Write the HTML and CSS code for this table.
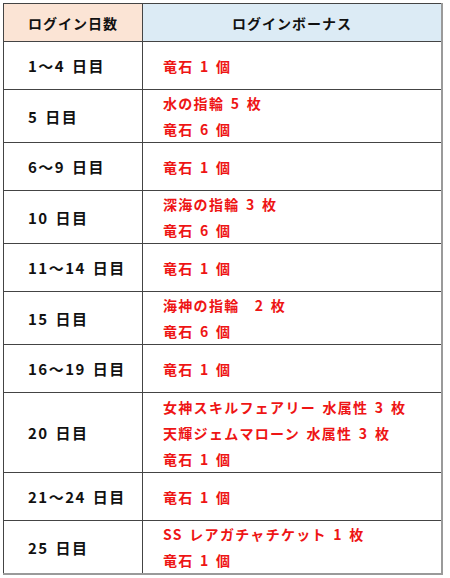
FILE: index.html
```html
<!DOCTYPE html>
<html lang="ja">
<head>
<meta charset="utf-8">
<link rel="stylesheet" href="styles.css">
</head>
<body>
<table class="bonus">
  <thead>
    <tr>
      <th class="h-days">ログイン日数</th>
      <th class="h-bonus">ログインボーナス</th>
    </tr>
  </thead>
  <tbody>
    <tr class="r1"><td class="day">1～4 日目</td><td class="item"><div>竜石 1 個</div></td></tr>
    <tr class="r2"><td class="day">5 日目</td><td class="item"><div>水の指輪 5 枚</div><div>竜石 6 個</div></td></tr>
    <tr class="r1"><td class="day">6～9 日目</td><td class="item"><div>竜石 1 個</div></td></tr>
    <tr class="r2"><td class="day">10 日目</td><td class="item"><div>深海の指輪 3 枚</div><div>竜石 6 個</div></td></tr>
    <tr class="r1"><td class="day">11～14 日目</td><td class="item"><div>竜石 1 個</div></td></tr>
    <tr class="r2"><td class="day">15 日目</td><td class="item"><div>海神の指輪　2 枚</div><div>竜石 6 個</div></td></tr>
    <tr class="r1"><td class="day">16～19 日目</td><td class="item"><div>竜石 1 個</div></td></tr>
    <tr class="r3"><td class="day">20 日目</td><td class="item"><div>女神スキルフェアリー 水属性 3 枚</div><div>天輝ジェムマローン 水属性 3 枚</div><div>竜石 1 個</div></td></tr>
    <tr class="r1"><td class="day">21～24 日目</td><td class="item"><div>竜石 1 個</div></td></tr>
    <tr class="r2"><td class="day">25 日目</td><td class="item"><div>SS レアガチャチケット 1 枚</div><div>竜石 1 個</div></td></tr>
  </tbody>
</table>
</body>
</html>
```

FILE: styles.css
```css
html, body {
  margin: 0;
  padding: 0;
  background: #ffffff;
}

body {
  padding: 3px 0 0 3px;
  font-family: "Noto Sans CJK JP", "Noto Sans", sans-serif;
  color: #111111;
}

.bonus {
  border-collapse: collapse;
  width: 440px;
  table-layout: fixed;
  border-left: 1px solid #444;
  border-top: 1px solid #444;
  border-right: 2px solid #9a9a9a;
  border-bottom: 2px solid #9a9a9a;
}

.bonus th,
.bonus td {
  border: 1px solid #444;
  padding: 0;
  vertical-align: middle;
}

.bonus th {
  height: 37px;
  font-size: 14px;
  font-weight: 700;
  letter-spacing: 1px;
  text-align: center;
}

.h-days {
  width: 138px;
  background: #fbe4d5;
}

.h-bonus {
  background: #dcebf5;
}

.day {
  padding-left: 24px !important;
  font-size: 15px;
  font-weight: 700;
  letter-spacing: 1.5px;
  word-spacing: 2px;
  text-align: left;
}

.item {
  padding-left: 20px !important;
  color: #ee1515;
  font-size: 14px;
  font-weight: 700;
  letter-spacing: 1.3px;
  word-spacing: 2px;
  line-height: 26px;
}

.item div {
  height: 26px;
}

.r1 td {
  height: 47px;
}

.r2 td {
  height: 52px;
}

.r3 td {
  height: 79px;
}
```
